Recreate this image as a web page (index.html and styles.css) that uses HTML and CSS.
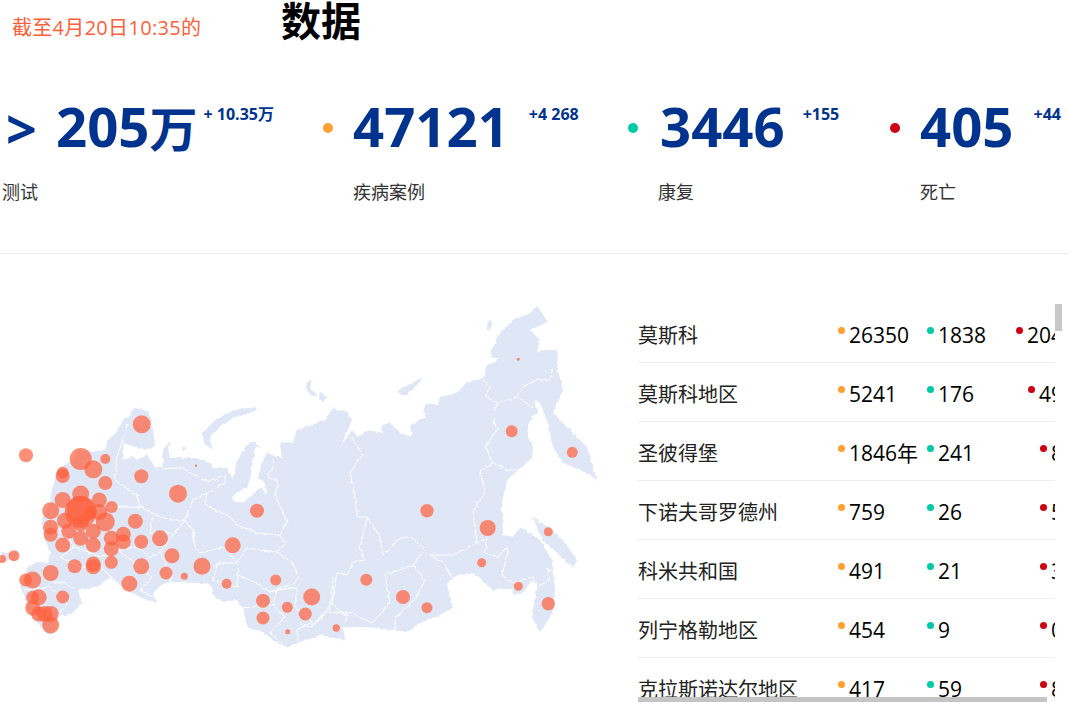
FILE: index.html
```html
<!DOCTYPE html>
<html lang="zh-CN">
<head>
<meta charset="utf-8">
<title>数据</title>
<link rel="stylesheet" href="styles.css">
</head>
<body>
<header class="head">
  <p class="as-of">截至4月20日10:35的</p>
  <h1 class="title">数据</h1>
</header>
<section class="stats">
  <div class="stat stat-test">
    <div class="stat-top">
      <span class="marker chevron">&gt;</span>
      <span class="value">205<span class="unit">万</span></span>
      <span class="delta">+ 10.35万</span>
    </div>
    <div class="label">测试</div>
  </div>
  <div class="stat stat-cases">
    <div class="stat-top">
      <span class="marker"><i class="dot-lg orange"></i></span>
      <span class="value">47121</span>
      <span class="delta">+4 268</span>
    </div>
    <div class="label">疾病案例</div>
  </div>
  <div class="stat stat-rec">
    <div class="stat-top">
      <span class="marker"><i class="dot-lg green"></i></span>
      <span class="value">3446</span>
      <span class="delta">+155</span>
    </div>
    <div class="label">康复</div>
  </div>
  <div class="stat stat-dead">
    <div class="stat-top">
      <span class="marker"><i class="dot-lg red"></i></span>
      <span class="value">405</span>
      <span class="delta">+44</span>
    </div>
    <div class="label">死亡</div>
  </div>
</section>
<main class="main">
  <svg class="map" viewBox="0 254 638 448" width="638" height="448" aria-label="俄罗斯地图">
    <defs>
      <filter id="rough" x="0" y="0" width="100%" height="100%">
        <feTurbulence type="fractalNoise" baseFrequency="0.22" numOctaves="2" seed="4" result="noise"/>
        <feDisplacementMap in="SourceGraphic" in2="noise" scale="3.5" xChannelSelector="R" yChannelSelector="G"/>
      </filter>
    </defs>
    <g class="geo">
      <g class="land">
        <path d="M57 470L72 460L80 449L92 452L106 450L107 441L118 430L123 420L130 416L133 408L143 409L150 414L153 430L155 445L147 450L135 447L124 443L123 460L132 457L137 460L147 455L155 467L163 467L163 450L171 441L168 447L170 458L195 458L210 463L213 468L227 468L233 480L237 460L250 442L255 443L262 450L272 455L282 458L280 443L293 442L297 430L325 420L333 408L347 412L352 420L347 432L340 447L352 430L357 437L370 430L382 433L382 425L390 423L400 433L412 437L410 425L427 417L423 410L427 403L437 405L440 397L457 393L467 382L483 378L487 365L497 360L490 357L497 337L513 320L530 313L537 306L540 310L548 322L530 330L540 340L537 352L543 350L558 350L557 367L563 390L553 413L567 427L587 447L593 467L597 480L587 473L563 463L553 447L548 423L540 403L534 400L538 413L530 420L527 433L533 447L532 458L507 480L502 503L503 535L513 537L520 527L540 540L552 560L555 590L553 613L540 632L532 618L533 610L537 587L532 580L523 592L513 595L513 588L493 590L473 573L457 575L447 583L448 590L452 608L440 615L420 623L407 632L393 630L367 627L343 627L345 640L320 635L300 642L287 647L277 643L263 632L248 628L243 610L237 600L223 602L213 595L212 585L202 583L173 582L163 583L153 593L157 602L147 600L130 592L110 577L97 587L78 590L82 603L72 613L57 617L57 630L50 635L43 630L35 620L27 610L25 597L20 587L23 577L28 567L37 562L48 563L50 553L43 533L42 517L50 503L53 487Z"/>
        <path d="M202 433L213 422L233 410L255 407L257 410L250 413L233 418L220 427L210 437L212 448L205 445Z"/>
        <path d="M532 517L548 527L563 540L577 560L573 568L557 553L543 540Z"/>
        <path d="M305 383L312 380L310 388L317 395L312 396L307 390Z"/>
        <path d="M320 392L327 397L322 402L319 399Z"/>
        <path d="M398 390L408 385L423 377L418 384L408 393L402 396Z"/>
        <path d="M487 322L491 321L491 328L488 331Z"/>
        <path d="M183 447L186 448L185 451L182 450Z"/>
        <path d="M1 553L17 552L18 560L2 562Z"/>
      </g>
      <path class="water" d="M256 447L252 465L250 480L246 488L236 492L232 497L236 503L243 502L252 496L258 488L263 487L264 494L267 493L264 482L258 478L262 462L267 452Z"/>
      <path class="water" d="M488 357L497 358L496 362L488 364Z"/>
      <g class="borders">
        <path d="M352 437L362 455L350 473L355 497L358 517L367 517L380 537L383 555L400 538L413 538L430 555L453 555L477 543L473 510L485 493L480 472L493 463L485 447L497 430L492 415L498 403L485 397L490 387L482 378"/>
        <path d="M498 403L517 397L522 387L537 380L550 380L553 368"/>
        <path d="M517 397L533 407"/>
        <path d="M493 463L507 470L517 470"/>
        <path d="M367 517L360 547L365 560L353 562L347 575L337 573L332 603L345 615L350 612L372 623L390 603L385 575L413 565L422 552"/>
        <path d="M413 565L425 580L415 600L395 618L395 630"/>
        <path d="M432 557L443 562L452 577"/>
        <path d="M477 543L487 538L485 553L497 557L507 547L508 553L502 575L513 583L533 577L537 587L550 580L547 568L553 572"/>
        <path d="M332 603L320 618L310 627L300 623"/>
        <path d="M170 468L182 468L207 482L225 475L225 483L207 493L205 505L220 512L230 517L237 525L257 533L280 535L287 522L275 495L278 482L268 477L275 463L273 458"/>
        <path d="M207 493L193 500L185 520L173 535"/>
        <path d="M185 520L195 533L193 540L193 530L195 547L200 553L225 547L237 563L247 548L277 552L285 543L278 533"/>
        <path d="M237 563L218 563L213 580L237 587L238 568"/>
        <path d="M238 575L257 583L270 592L295 583L298 577L293 563L277 552"/>
        <path d="M242 608L273 605L277 590"/>
        <path d="M273 605L285 617L270 633L283 645"/>
        <path d="M277 590L297 588L295 607L312 622L297 630L298 642"/>
        <path d="M312 627L327 612L347 613L345 622"/>
        <path d="M330 610L333 577"/>
        <path d="M128 423L117 457L115 480L137 495L140 507L117 507"/>
        <path d="M140 507L157 515L170 520L185 520"/>
        <path d="M153 515L150 533L170 533L173 535"/>
        <path d="M157 470L170 468"/>
        <path d="M137 547L150 557L160 552L173 535"/>
        <path d="M117 550L132 560L152 577L140 590L157 600"/>
        <path d="M75 547L100 557L117 550L137 547"/>
        <path d="M60 557L80 567L100 567L115 580"/>
        <path d="M52 582L63 582L75 590"/>
        <path d="M23 590L50 587L67 603L57 617"/>
        <path d="M160 552L172 575L170 582"/>
        <path d="M75 490L90 510L117 507"/>
        <path d="M50 520L75 547L60 557"/>
      </g>
    </g>
    <g class="bubbles">
      <circle cx="141.7" cy="424.3" r="9"/><circle cx="26" cy="455.3" r="7"/><circle cx="80.7" cy="459" r="11"/>
      <circle cx="93.3" cy="469.3" r="9"/><circle cx="105.3" cy="459" r="5"/><circle cx="62.7" cy="472.7" r="6"/>
      <circle cx="62.7" cy="476" r="7"/><circle cx="105.3" cy="483" r="7"/><circle cx="141.3" cy="476.3" r="7"/>
      <circle cx="178" cy="493.7" r="9"/><circle cx="80.7" cy="494" r="8.5"/><circle cx="62.7" cy="500" r="8"/>
      <circle cx="99.3" cy="500" r="7.5"/><circle cx="111.7" cy="507" r="6"/><circle cx="50.7" cy="510.7" r="8.5"/>
      <circle cx="80.7" cy="512" r="16"/><circle cx="80.7" cy="510" r="14"/><circle cx="99.3" cy="512" r="8"/>
      <circle cx="90" cy="513.3" r="6.5"/><circle cx="65" cy="520.7" r="8"/><circle cx="105.3" cy="521.7" r="9.5"/>
      <circle cx="135.3" cy="521.3" r="7.5"/><circle cx="80.7" cy="523.3" r="8"/><circle cx="50.7" cy="527.3" r="7.5"/>
      <circle cx="50.7" cy="534.7" r="7"/><circle cx="68.7" cy="531.3" r="7.5"/><circle cx="93.3" cy="531.3" r="7.5"/>
      <circle cx="80.7" cy="538.3" r="7.5"/><circle cx="111.3" cy="538.3" r="7.5"/><circle cx="123.3" cy="534.3" r="7.5"/>
      <circle cx="123.3" cy="541.7" r="7.5"/><circle cx="141.3" cy="541.7" r="7"/><circle cx="160" cy="538.3" r="8"/>
      <circle cx="62.7" cy="545" r="7.5"/><circle cx="93.3" cy="545" r="7.5"/><circle cx="111.3" cy="548.7" r="7.5"/>
      <circle cx="172" cy="555.7" r="7.5"/><circle cx="141.3" cy="566.3" r="8"/><circle cx="111.3" cy="562.3" r="6.5"/>
      <circle cx="93.3" cy="564" r="7.5"/><circle cx="93.3" cy="566.7" r="7.5"/><circle cx="74.7" cy="566.3" r="7"/>
      <circle cx="202" cy="566.3" r="8.5"/><circle cx="50.7" cy="573" r="8"/><circle cx="166" cy="573" r="6.5"/>
      <circle cx="184.3" cy="576.3" r="3.5"/><circle cx="129.3" cy="583.7" r="8"/><circle cx="226.7" cy="583.7" r="5"/>
      <circle cx="14" cy="555.7" r="5.5"/><circle cx="2" cy="559" r="4"/><circle cx="25.7" cy="580" r="6.5"/>
      <circle cx="32.7" cy="580" r="8.5"/><circle cx="32.7" cy="597.3" r="6.5"/><circle cx="38.7" cy="597.3" r="8"/>
      <circle cx="62.7" cy="597" r="6.5"/><circle cx="32.7" cy="608" r="7.5"/><circle cx="38.7" cy="614" r="7.5"/>
      <circle cx="44.7" cy="614" r="8"/><circle cx="50.7" cy="614" r="8"/><circle cx="50.7" cy="625" r="8.5"/>
      <circle cx="257" cy="510.7" r="7"/><circle cx="232.7" cy="545.3" r="8"/><circle cx="275.7" cy="580" r="5.5"/>
      <circle cx="263" cy="600.7" r="7"/><circle cx="263" cy="618" r="6.5"/><circle cx="287.3" cy="607.3" r="5.5"/>
      <circle cx="287.7" cy="631.7" r="2.5"/><circle cx="196" cy="465.7" r="1.2"/><circle cx="311.7" cy="597" r="8.5"/>
      <circle cx="305.3" cy="614" r="6.5"/><circle cx="336.3" cy="628" r="3.7"/><circle cx="366.3" cy="579.7" r="6"/>
      <circle cx="403" cy="597" r="7"/><circle cx="427" cy="607.7" r="5.5"/><circle cx="427" cy="510.7" r="6.7"/>
      <circle cx="487.7" cy="528" r="8"/><circle cx="511.7" cy="431.3" r="6"/><circle cx="572.3" cy="452.3" r="5.5"/>
      <circle cx="518.3" cy="359.3" r="1.5"/><circle cx="548.3" cy="531.7" r="4.5"/><circle cx="481.7" cy="562.7" r="4.5"/>
      <circle cx="518.3" cy="586.3" r="4.5"/><circle cx="548.3" cy="603.7" r="6.7"/>
    </g>
  </svg>
  <div class="list-wrap">
    <div class="list">
      <div class="row"><span class="name">莫斯科</span><span class="num"><i class="dot orange"></i>26350</span><span class="num"><i class="dot green"></i>1838</span><span class="num end"><i class="dot red"></i>204</span></div>
      <div class="row"><span class="name">莫斯科地区</span><span class="num"><i class="dot orange"></i>5241</span><span class="num"><i class="dot green"></i>176</span><span class="num end"><i class="dot red"></i>49</span></div>
      <div class="row"><span class="name">圣彼得堡</span><span class="num"><i class="dot orange"></i>1846年</span><span class="num"><i class="dot green"></i>241</span><span class="num end"><i class="dot red"></i>8</span></div>
      <div class="row"><span class="name">下诺夫哥罗德州</span><span class="num"><i class="dot orange"></i>759</span><span class="num"><i class="dot green"></i>26</span><span class="num end"><i class="dot red"></i>5</span></div>
      <div class="row"><span class="name">科米共和国</span><span class="num"><i class="dot orange"></i>491</span><span class="num"><i class="dot green"></i>21</span><span class="num end"><i class="dot red"></i>3</span></div>
      <div class="row"><span class="name">列宁格勒地区</span><span class="num"><i class="dot orange"></i>454</span><span class="num"><i class="dot green"></i>9</span><span class="num end"><i class="dot red"></i>0</span></div>
      <div class="row"><span class="name">克拉斯诺达尔地区</span><span class="num"><i class="dot orange"></i>417</span><span class="num"><i class="dot green"></i>59</span><span class="num end"><i class="dot red"></i>8</span></div>
    </div>
    <div class="thumb-v"></div>
    <div class="thumb-h"></div>
  </div>
</main>
</body>
</html>
```
FILE: styles.css
```css
html, body {
  margin: 0;
  padding: 0;
  background: #fff;
}
body {
  width: 1069px;
  height: 702px;
  overflow: hidden;
  font-family: "Open Sans", "Noto Sans CJK SC", sans-serif;
  color: #000;
}
.head {
  display: flex;
  align-items: flex-start;
  height: 92px;
  padding-left: 12px;
}
.as-of {
  margin: 15px 0 0;
  width: 269px;
  font-size: 20px;
  line-height: 26px;
  letter-spacing: 0.3px;
  color: #ff5e3a;
  white-space: nowrap;
}
.title {
  margin: 0;
  font-size: 40px;
  line-height: 42px;
  font-weight: 700;
}
.stats {
  display: flex;
  height: 161px;
  border-bottom: 1px solid #eeeeee;
  box-sizing: content-box;
}
.stat-test { width: 321px; margin-left: 2px; }
.stat-cases { width: 305px; }
.stat-rec { width: 262px; }
.stat-dead { width: 179px; }
.stat-top {
  display: flex;
  align-items: flex-start;
  height: 72px;
  white-space: nowrap;
}
.marker {
  display: flex;
  align-items: center;
  width: 30px;
  height: 72px;
  flex: none;
}
.chevron {
  width: 54px;
  padding-left: 4px;
  box-sizing: border-box;
  font-size: 54px;
  font-weight: 700;
  color: #00338d;
}
.stat-rec .marker { width: 32px; }
.value {
  margin-top: -2px;
  font-size: 54.5px;
  line-height: 72px;
  font-weight: 700;
  color: #00338d;
}
.unit {
  font-size: 48px;
}
.delta {
  margin: 11px 0 0 20px;
  font-size: 16px;
  line-height: 22px;
  font-weight: 700;
  color: #00338d;
}
.stat-test .delta { margin-left: 6px; }
.stat-rec .delta { margin-left: 18px; }
.label {
  margin-top: 16px;
  font-size: 18px;
  line-height: 24px;
  color: #333;
}
.stat-cases .label, .stat-rec .label, .stat-dead .label { margin-left: 30px; }
.dot-lg {
  display: block;
  width: 10px;
  height: 10px;
  border-radius: 50%;
}
.dot {
  display: inline-block;
  width: 7px;
  height: 7px;
  margin-right: 4px;
  border-radius: 50%;
  vertical-align: 9px;
}
.orange { background: #ffa031; }
.green { background: #00c9a7; }
.red { background: #cc0011; }
.main {
  display: flex;
  height: 448px;
  overflow: hidden;
}
.map {
  display: block;
  flex: none;
}
.geo { filter: url(#rough); }
.land { fill: #dfe6f6; }
.water { fill: #fff; }
.borders {
  fill: none;
  stroke: #fff;
  stroke-width: 1;
}
.bubbles circle {
  fill: #ff5f3c;
  fill-opacity: 0.7;
}
.list-wrap {
  position: relative;
  width: 431px;
  flex: none;
  margin-top: 50px;
}
.list {
  width: 417px;
  height: 398px;
  overflow: hidden;
}
.row {
  display: grid;
  grid-template-columns: 200px 89px 89px 47px;
  align-items: center;
  box-sizing: content-box;
  width: 425px;
  height: 52px;
  padding-top: 6px;
  border-bottom: 1px solid #eeeeee;
  white-space: nowrap;
}
.name {
  font-size: 20px;
  line-height: 28px;
  color: #222;
}
.num {
  margin-bottom: 2px;
  font-size: 21px;
  line-height: 28px;
  color: #000;
}
.end {
  justify-self: end;
}
.thumb-v {
  position: absolute;
  top: 0;
  left: 417px;
  width: 7px;
  height: 27px;
  background: #c8c8c8;
}
.thumb-h {
  position: absolute;
  top: 393px;
  left: 0;
  width: 409px;
  height: 5px;
  background: #c4c4c4;
}
```
